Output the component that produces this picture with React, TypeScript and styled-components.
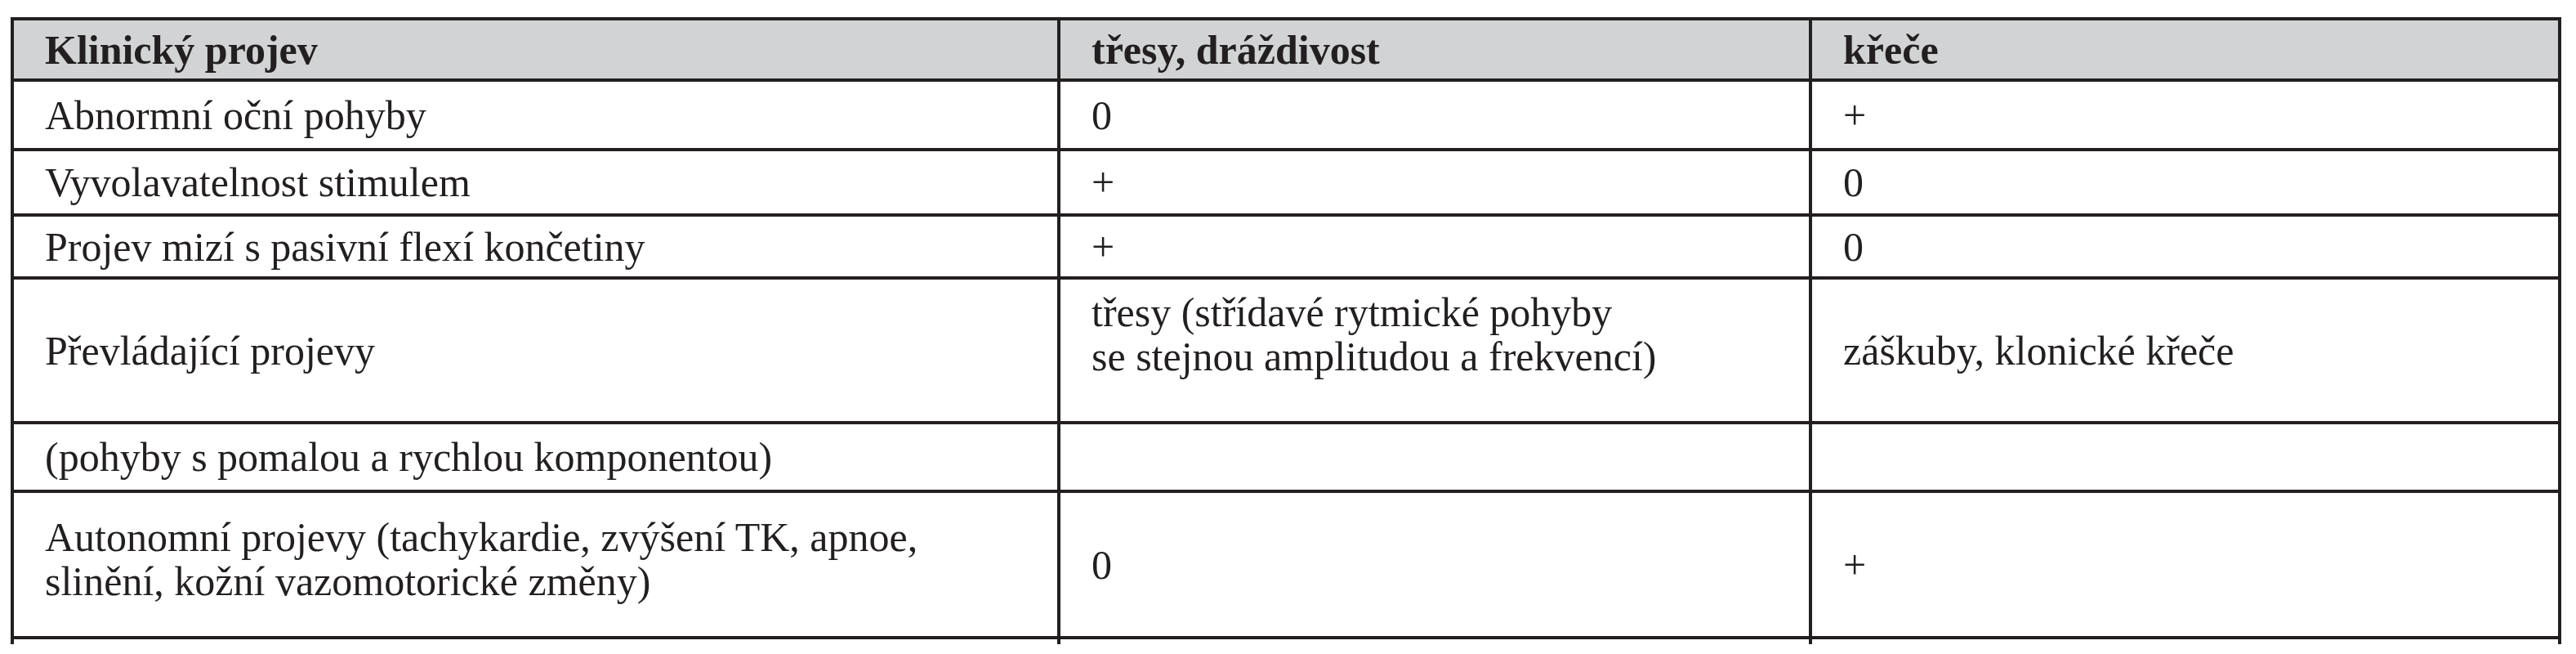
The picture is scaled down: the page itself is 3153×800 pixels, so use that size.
import React from "react";
import styled, { createGlobalStyle } from "styled-components";

const GlobalStyle = createGlobalStyle`
  html, body {
    margin: 0;
    padding: 0;
    background: #ffffff;
  }
  body {
    font-family: "Liberation Serif", "Times New Roman", serif;
    color: #231f20;
  }
`;

const Page = styled.div`
  padding: 21px 0 0 13px;
  width: 3153px;
  height: 800px;
  box-sizing: border-box;
`;

const Table = styled.div`
  display: flex;
  flex-direction: column;
  width: 3122px;
  border-top: 4px solid #231f20;
  border-left: 4px solid #231f20;
  box-sizing: border-box;
`;

const Row = styled.div<{ $h: number; $head?: boolean; $tail?: boolean }>`
  display: grid;
  grid-template-columns: 1281px 920px 917px;
  height: ${(p) => p.$h}px;
  background: ${(p) => (p.$head ? "#d1d3d4" : "#ffffff")};
  font-weight: ${(p) => (p.$head ? 700 : 400)};
  & > div {
    border-bottom: ${(p) => (p.$tail ? "none" : "4px solid #231f20")};
  }
`;

const Cell = styled.div<{ $raise?: number }>`
  display: flex;
  flex-direction: column;
  justify-content: center;
  padding: 0 0 ${(p) => p.$raise ?? 0}px 38px;
  border-right: 4px solid #231f20;
  font-size: 50px;
  line-height: 54px;
  white-space: nowrap;
`;

type RowData = { h: number; cells: string[][]; raise?: number[] };

const header = ["Klinický projev", "třesy, dráždivost", "křeče"];

const rows: RowData[] = [
  { h: 85, cells: [["Abnormní oční pohyby"], ["0"], ["+"]] },
  { h: 80, cells: [["Vyvolavatelnost stimulem"], ["+"], ["0"]] },
  { h: 77, cells: [["Projev mizí s pasivní flexí končetiny"], ["+"], ["0"]] },
  {
    h: 177,
    cells: [
      ["Převládající projevy"],
      ["třesy (střídavé rytmické pohyby", "se stejnou amplitudou a frekvencí)"],
      ["záškuby, klonické křeče"],
    ],
    raise: [0, 40, 0],
  },
  { h: 84, cells: [["(pohyby s pomalou a rychlou komponentou)"], [""], [""]] },
  {
    h: 179,
    cells: [
      ["Autonomní projevy (tachykardie, zvýšení TK, apnoe,", "slinění, kožní vazomotorické změny)"],
      ["0"],
      ["+"],
    ],
    raise: [14, 0, 0],
  },
];

export default function App() {
  return (
    <Page>
      <GlobalStyle />
      <Table>
        <Row $h={75} $head>
          {header.map((t) => (
            <Cell key={t}>{t}</Cell>
          ))}
        </Row>
        {rows.map((r, i) => (
          <Row key={i} $h={r.h}>
            {r.cells.map((lines, j) => (
              <Cell key={j} $raise={r.raise?.[j]}>
                {lines.map((l, k) => (
                  <span key={k}>{l}</span>
                ))}
              </Cell>
            ))}
          </Row>
        ))}
        <Row $h={6} $tail>
          <Cell />
          <Cell />
          <Cell />
        </Row>
      </Table>
    </Page>
  );
}
